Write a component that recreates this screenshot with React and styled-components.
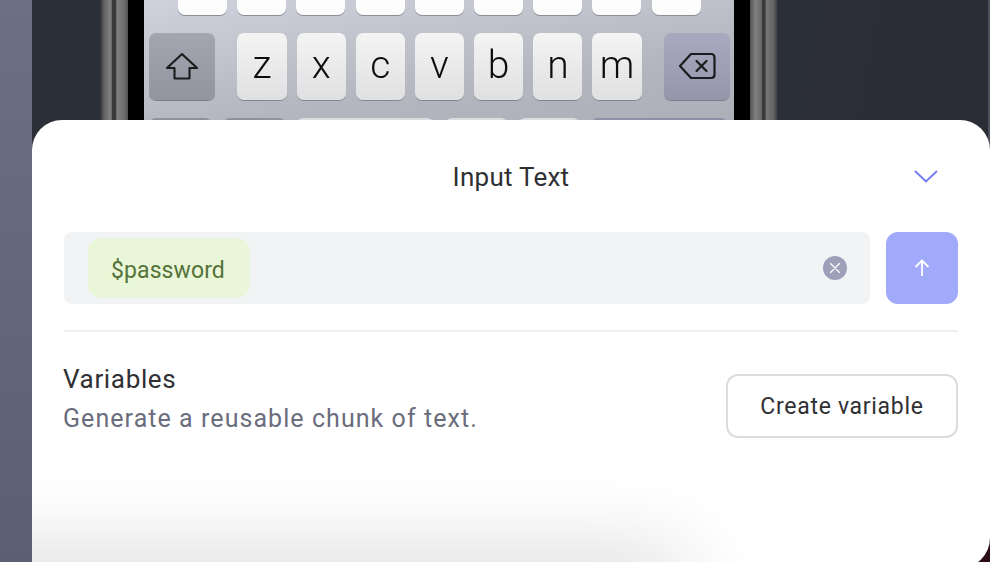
import React from 'react';
import styled, { createGlobalStyle } from 'styled-components';

const uiFont = '"Roboto", "Liberation Sans", sans-serif';

const GlobalStyle = createGlobalStyle`
  html, body {
    margin: 0;
    padding: 0;
    background: #2b2f38;
  }
`;

const topRow = Array.from({ length: 9 }, (_, i) => i);
const letters = ['z', 'x', 'c', 'v', 'b', 'n', 'm'];
const bottomKeys = [
  { id: 'num', w: 63, tone: 'dark' },
  { id: 'globe', w: 63, tone: 'dark' },
  { id: 'space', w: 138, tone: 'light' },
  { id: 'at', w: 63, tone: 'light' },
  { id: 'dot', w: 62, tone: 'light' },
  { id: 'go', w: 137, tone: 'tint' },
];

const App = () => (
  <>
    <GlobalStyle />
    <Page>
      <SideStrip />
      <Stage>
        <Device>
          <Bezel />
          <BlackEdge />
          <Keyboard>
            <TopKeys>
              {topRow.map((i) => <TopKey key={i} />)}
            </TopKeys>
            <LetterRow>
              <FnKey>
                <svg width="32" height="28" viewBox="0 0 32 28" fill="none" stroke="#1c1c1e" strokeWidth="2.1" strokeLinejoin="round">
                  <path d="M16 2 L31 16 H23.5 V26.5 H8.5 V16 H1 Z" />
                </svg>
              </FnKey>
              <Letters>
                {letters.map((l) => <LetterKey key={l}>{l}</LetterKey>)}
              </Letters>
              <FnKey $tint>
                <svg width="38" height="28" viewBox="0 0 38 28" fill="none" stroke="#1c1c1e" strokeWidth="2.2" strokeLinejoin="round" strokeLinecap="round">
                  <path d="M13 2 H33 Q36.5 2 36.5 5.5 V22.5 Q36.5 26 33 26 H13 L2 14 Z" />
                  <path d="M18.5 9 L28.5 19 M28.5 9 L18.5 19" />
                </svg>
              </FnKey>
            </LetterRow>
            <BottomRow>
              {bottomKeys.map((k) => <BottomKey key={k.id} $w={k.w} $tone={k.tone} />)}
            </BottomRow>
          </Keyboard>
          <BlackEdge />
          <Bezel $flip />
        </Device>
      </Stage>
      <Sheet>
        <SheetHeader>
          <SheetTitle>Input Text</SheetTitle>
          <Collapse aria-label="Collapse">
            <svg width="24" height="14" viewBox="0 0 24 14" fill="none" stroke="#6f7cf0" strokeWidth="1.8">
              <path d="M1 2 L12 12.5 L23 2" />
            </svg>
          </Collapse>
        </SheetHeader>
        <InputRow>
          <InputBox>
            <VariableChip>$password</VariableChip>
            <ClearButton aria-label="Clear">
              <svg width="10" height="10" viewBox="0 0 10 10" stroke="#fff" strokeWidth="1.4" strokeLinecap="round">
                <path d="M0.5 0.5 L9.5 9.5 M9.5 0.5 L0.5 9.5" />
              </svg>
            </ClearButton>
          </InputBox>
          <SendButton aria-label="Send">
            <svg width="16" height="18" viewBox="0 0 16 18" fill="none" stroke="#fff" strokeWidth="1.8">
              <path d="M8 17 V2 M1.5 8 L8 1.5 L14.5 8" />
            </svg>
          </SendButton>
        </InputRow>
        <Divider />
        <VariablesRow>
          <VariablesText>
            <VariablesTitle>Variables</VariablesTitle>
            <VariablesHint>Generate a reusable chunk of text.</VariablesHint>
          </VariablesText>
          <CreateButton>Create variable</CreateButton>
        </VariablesRow>
        <BottomShade />
      </Sheet>
    </Page>
  </>
);

const Page = styled.div`
  position: relative;
  display: flex;
  align-items: flex-start;
  width: 990px;
  height: 562px;
  overflow: hidden;
  background: #2a0c14;
`;

const SideStrip = styled.div`
  width: 32px;
  height: 562px;
  flex: none;
  background: linear-gradient(180deg, #6c7085 0%, #5c5f72 100%);
`;

const Stage = styled.div`
  flex: 1;
  height: 538px;
  display: flex;
  align-items: flex-start;
  padding-left: 68px;
  background: linear-gradient(100deg, #2b2f38 0%, #2c3039 60%, #292c34 100%);
  border-right: 2px solid #4d505c;
`;

const Device = styled.div`
  display: flex;
  height: 160px;
`;

const Bezel = styled.div`
  width: 28px;
  background: ${(p) => (p.$flip
    ? 'linear-gradient(90deg, #555 0%, #808080 20%, #666 42%, #3a3a3c 44%, #3a3a3c 54%, #787878 58%, #626264 85%, #2e3138 100%)'
    : 'linear-gradient(90deg, #2e3138 0%, #626264 15%, #808080 36%, #666 42%, #3a3a3c 44%, #3a3a3c 56%, #808080 60%, #707070 85%, #505050 100%)')};
`;

const BlackEdge = styled.div`
  width: 16px;
  background: #000;
`;

const Keyboard = styled.div`
  width: 590px;
  display: flex;
  flex-direction: column;
  overflow: hidden;
  background: linear-gradient(172deg, #cfd2dc 0%, #b4b6bf 55%, #aaabb4 100%);
  font-family: "Roboto", "Liberation Sans", Arial, sans-serif;
  filter: blur(0.4px);
`;

const TopKeys = styled.div`
  display: flex;
  gap: 10.2px;
  height: 15px;
  padding-left: 34px;
`;

const TopKey = styled.div`
  width: 49px;
  height: 15px;
  border-radius: 0 0 7px 7px;
  background: #fdfdfd;
  box-shadow: 0 1px 0 #8c8e98;
`;

const LetterRow = styled.div`
  display: flex;
  justify-content: space-between;
  margin-top: 18px;
  padding: 0 4px 0 5px;
  height: 67px;
`;

const FnKey = styled.div`
  width: 66px;
  height: 67px;
  padding-bottom: 2px;
  box-sizing: border-box;
  display: flex;
  align-items: center;
  justify-content: center;
  border-radius: 7px;
  background: ${(p) => (p.$tint
    ? 'linear-gradient(180deg, #a8a9bf 0%, #9596ab 100%)'
    : 'linear-gradient(180deg, #a3a6b0 0%, #92959f 100%)')};
  box-shadow: 0 1px 0 #7c7e88;
`;

const Letters = styled.div`
  display: flex;
  gap: 10px;
`;

const LetterKey = styled.div`
  width: 49.2px;
  height: 67px;
  display: flex;
  align-items: center;
  justify-content: center;
  padding-bottom: 4px;
  box-sizing: border-box;
  border-radius: 7px;
  font-size: 39px;
  font-weight: 300;
  color: #0c0c0e;
  background: linear-gradient(180deg, #f4f4f4 0%, #e0e0e2 100%);
  box-shadow: 0 1px 0 #85878f;
`;

const BottomRow = styled.div`
  display: flex;
  gap: 10.5px;
  margin-top: 18px;
  padding-left: 5px;
`;

const keyTones = { dark: '#8f919c', light: '#dcdde0', tint: '#8f8fa6' };

const BottomKey = styled.div`
  width: ${(p) => p.$w}px;
  height: 40px;
  border-radius: 7px 7px 0 0;
  background: ${(p) => keyTones[p.$tone]};
`;

const Sheet = styled.div`
  position: absolute;
  left: 32px;
  top: 120px;
  right: 0;
  bottom: -6px;
  display: flex;
  flex-direction: column;
  padding: 0 32px;
  overflow: hidden;
  border-radius: 30px 30px 30px 0;
  background: #fff;
  font-family: ${uiFont};
`;

const SheetHeader = styled.div`
  position: relative;
  height: 112px;
  display: flex;
  align-items: flex-start;
  justify-content: center;
  padding-top: 39px;
  box-sizing: border-box;
`;

const SheetTitle = styled.div`
  font-size: 26px;
  line-height: 36px;
  color: #2f3033;
  letter-spacing: 0.25px;
`;

const Collapse = styled.button`
  position: absolute;
  right: 20px;
  top: 49px;
  padding: 0;
  border: 0;
  background: none;
  display: flex;
`;

const InputRow = styled.div`
  display: flex;
  gap: 16px;
`;

const InputBox = styled.div`
  flex: 1;
  height: 72px;
  display: flex;
  align-items: center;
  justify-content: space-between;
  padding: 0 23px 0 24px;
  box-sizing: border-box;
  border-radius: 8px;
  background: #f2f3f5;
`;

const VariableChip = styled.div`
  height: 60px;
  display: flex;
  align-items: center;
  padding: 4px 25px 0 23px;
  box-sizing: border-box;
  border-radius: 14px;
  font-size: 23px;
  letter-spacing: 0.1px;
  color: #557238;
  background: #e9f6d8;
`;

const ClearButton = styled.button`
  width: 24px;
  height: 24px;
  padding: 0;
  border: 0;
  border-radius: 50%;
  display: flex;
  align-items: center;
  justify-content: center;
  background: #9ca0b8;
`;

const SendButton = styled.button`
  width: 72px;
  height: 72px;
  padding: 0;
  border: 0;
  border-radius: 12px;
  display: flex;
  align-items: center;
  justify-content: center;
  background: #a0a9fa;
`;

const Divider = styled.div`
  height: 2px;
  margin-top: 26px;
  background: #eeeff1;
`;

const VariablesRow = styled.div`
  display: flex;
  justify-content: space-between;
  align-items: flex-start;
  margin-top: 30px;
`;

const VariablesText = styled.div`
  display: flex;
  flex-direction: column;
  gap: 6px;
`;

const VariablesTitle = styled.div`
  font-size: 26px;
  line-height: 34px;
  letter-spacing: 0.65px;
  margin-left: -1px;
  color: #2f3033;
`;

const VariablesHint = styled.div`
  font-size: 25px;
  line-height: 34px;
  letter-spacing: 1.06px;
  margin-left: -1px;
  color: #6a6d7d;
`;

const CreateButton = styled.button`
  width: 232px;
  height: 64px;
  margin-top: 12px;
  border: 2px solid #dcdcdc;
  border-radius: 12px;
  background: #fff;
  font-family: ${uiFont};
  font-size: 23px;
  letter-spacing: 0.7px;
  color: #2f3033;
`;

// soft shadow from something below the fold, only its upper edge is visible
const BottomShade = styled.div`
  position: absolute;
  left: -120px;
  bottom: -34px;
  width: 770px;
  height: 40px;
  background: #cfcfcf;
  box-shadow: 0 0 85px rgba(0, 0, 0, 0.24);
`;

export default App;
